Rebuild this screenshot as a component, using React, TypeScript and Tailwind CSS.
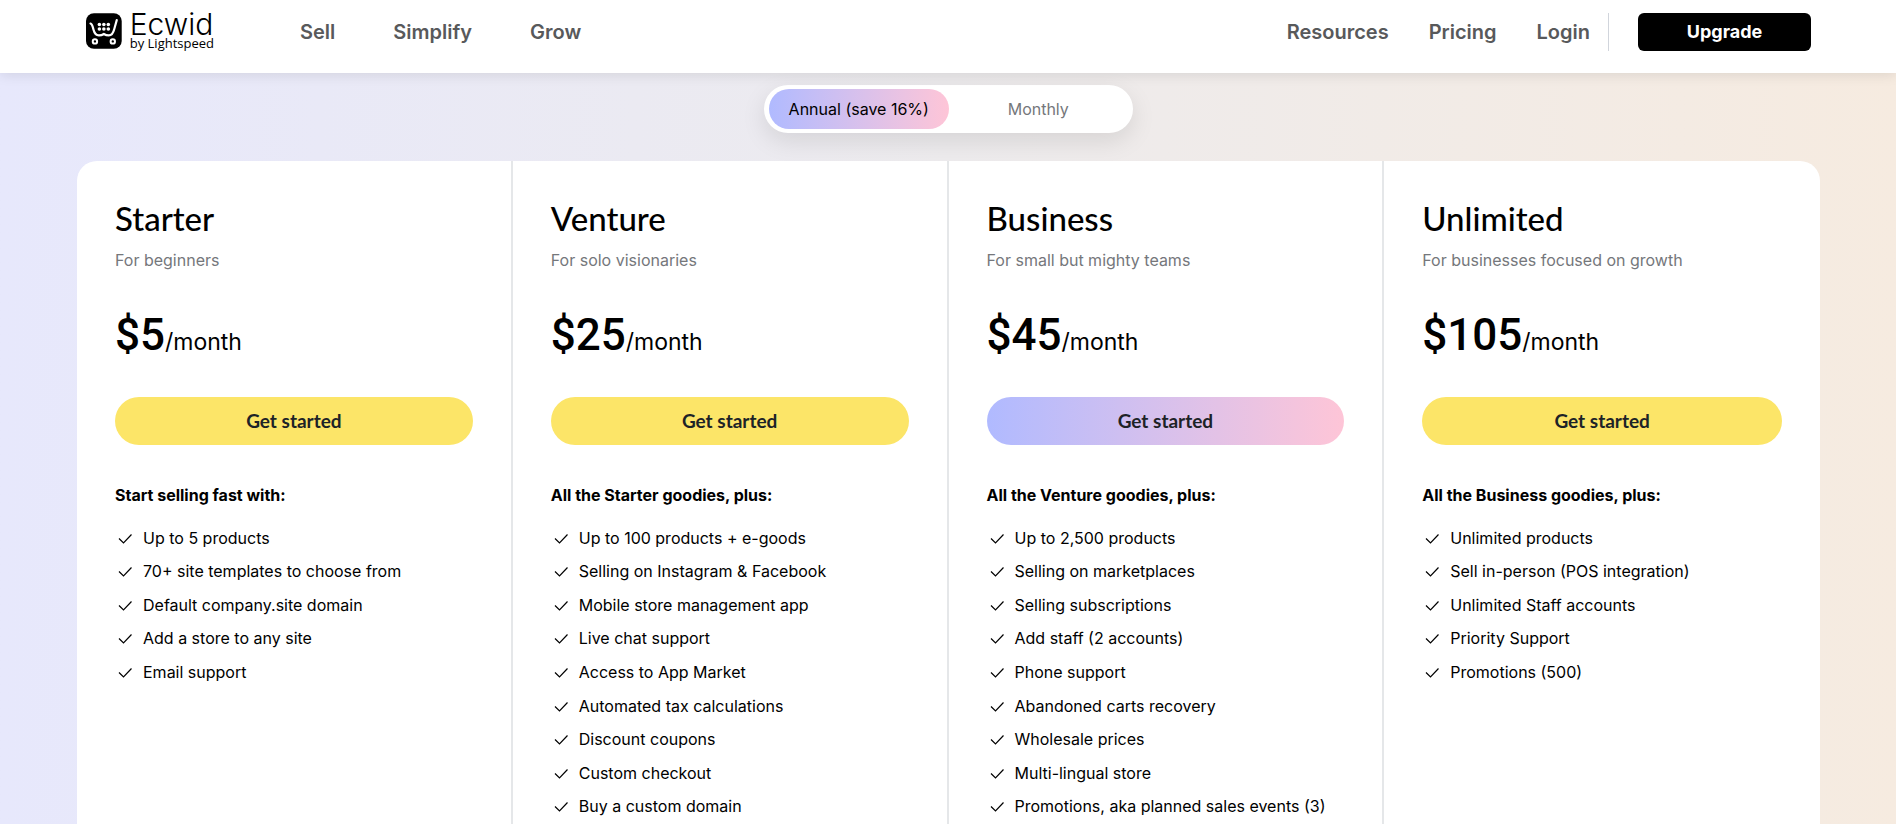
import React, { useState } from "react";

interface Plan {
	name: string;
	audience: string;
	price: string;
	intro: string;
	features: string[];
	highlighted?: boolean;
}

const plans: Plan[] = [
	{
		name: "Starter",
		audience: "For beginners",
		price: "$5",
		intro: "Start selling fast with:",
		features: [
			"Up to 5 products",
			"70+ site templates to choose from",
			"Default company.site domain",
			"Add a store to any site",
			"Email support",
		],
	},
	{
		name: "Venture",
		audience: "For solo visionaries",
		price: "$25",
		intro: "All the Starter goodies, plus:",
		features: [
			"Up to 100 products + e-goods",
			"Selling on Instagram & Facebook",
			"Mobile store management app",
			"Live chat support",
			"Access to App Market",
			"Automated tax calculations",
			"Discount coupons",
			"Custom checkout",
			"Buy a custom domain",
		],
	},
	{
		name: "Business",
		audience: "For small but mighty teams",
		price: "$45",
		intro: "All the Venture goodies, plus:",
		features: [
			"Up to 2,500 products",
			"Selling on marketplaces",
			"Selling subscriptions",
			"Add staff (2 accounts)",
			"Phone support",
			"Abandoned carts recovery",
			"Wholesale prices",
			"Multi-lingual store",
			"Promotions, aka planned sales events (3)",
		],
		highlighted: true,
	},
	{
		name: "Unlimited",
		audience: "For businesses focused on growth",
		price: "$105",
		intro: "All the Business goodies, plus:",
		features: [
			"Unlimited products",
			"Sell in-person (POS integration)",
			"Unlimited Staff accounts",
			"Priority Support",
			"Promotions (500)",
		],
	},
];

const CartLogo: React.FC = () => (
	<svg viewBox="0 0 36 36" className="size-9" aria-hidden="true">
		<rect width="36" height="36" rx="8" fill="#000" />
		<path
			d="M4.500 10.500C6.500 11 6.500 13 7.500 16.500C8.500 20.500 9.500 22.500 13 22.500C15.500 22.500 16.500 22 18 21C19.500 22 20.500 22.500 23 22.500C26.500 22.500 27.500 20 28.500 16L31 7"
			fill="none"
			stroke="#fff"
			strokeWidth="2.200"
			strokeLinecap="round"
			strokeLinejoin="round"
		/>
		<g fill="#fff">
			<circle cx="13.500" cy="11.500" r="1.800" />
			<circle cx="18" cy="11.500" r="1.800" />
			<circle cx="22.500" cy="11.500" r="1.800" />
			<circle cx="13.500" cy="16" r="1.800" />
			<circle cx="18" cy="16" r="1.800" />
			<circle cx="22.500" cy="16" r="1.800" />
		</g>
		<g fill="none" stroke="#fff" strokeWidth="2">
			<circle cx="9" cy="28.500" r="2.200" />
			<circle cx="27" cy="28.500" r="2.200" />
		</g>
	</svg>
);

const CheckMark: React.FC = () => (
	<svg viewBox="0 0 20 20" className="size-5 shrink-0" aria-hidden="true">
		<path d="M4 10.500L8.500 15L16.500 6.500" fill="none" stroke="#000" strokeWidth="1.200" />
	</svg>
);

const Header: React.FC = () => (
	<header className="relative z-10 flex h-[73px] items-start bg-white pt-[13px] pr-[85px] pl-[86px] shadow-[0_2px_12px_rgba(0,0,0,0.1)]">
		<a href="#" className="flex w-32 items-start gap-2 text-black">
			<CartLogo />
			<span className="flex flex-col whitespace-nowrap">
				<span className="text-[30px] leading-[22px] font-light">Ecwid</span>
				<span className="font-[Open_Sans] text-[13px] leading-4">by Lightspeed</span>
			</span>
		</a>
		<nav className="flex h-[38px] flex-1 items-center pl-[86px] text-xl font-semibold text-[#58595b]">
			<div className="flex gap-[58px]">
				<a href="#">Sell</a>
				<a href="#">Simplify</a>
				<a href="#">Grow</a>
			</div>
			<div className="ml-auto flex gap-10">
				<a href="#">Resources</a>
				<a href="#">Pricing</a>
				<a href="#">Login</a>
			</div>
		</nav>
		<div className="ml-[18px] flex h-[38px] items-center border-l border-gray-300 pl-[29px]">
			<button className="h-[38px] w-[173px] rounded-md bg-black text-lg font-bold text-white">Upgrade</button>
		</div>
	</header>
);

const BillingToggle: React.FC = () => {
	const [annual, setAnnual] = useState(true);
	const active = "bg-linear-to-r from-[#b0baff] to-[#fec5d7] text-black";
	const idle = "text-[#75777b]";

	return (
		<div className="mx-auto flex h-12 w-[369px] items-stretch rounded-full bg-white px-[5px] py-1 shadow-[0_8px_24px_rgba(0,0,0,0.1)]">
			<button
				onClick={() => setAnnual(true)}
				aria-pressed={annual}
				className={`flex-1 rounded-full ${annual ? active : idle}`}>
				Annual (save 16%)
			</button>
			<button
				onClick={() => setAnnual(false)}
				aria-pressed={!annual}
				className={`flex-1 rounded-full ${annual ? idle : active}`}>
				Monthly
			</button>
		</div>
	);
};

const PlanCard: React.FC<{ plan: Plan }> = ({ plan }) => (
	<article className="border-r-2 border-[#e5e7e9] px-[38px] pt-[39px] last:border-r-0">
		<h2 className="font-[Lato] text-[33px] leading-9 font-medium">{plan.name}</h2>
		<p className="mt-3 leading-6 text-[#75777b]">{plan.audience}</p>
		<div className="mt-[35px] flex h-14 items-baseline">
			<span className="font-[Roboto] text-[44px] leading-14 font-medium">{plan.price}</span>
			<span className="text-[23px] leading-8">/month</span>
		</div>
		<button
			className={`mt-[34px] h-12 w-full rounded-full font-[Lato] text-[19px] font-bold text-[#1d2327] ${
				plan.highlighted ? "bg-linear-to-r from-[#b0baff] to-[#fec5d7]" : "bg-[#fce568]"
			}`}>
			Get started
		</button>
		<h3 className="mt-[38px] leading-6 font-bold">{plan.intro}</h3>
		<ul className="mt-[14px] grid min-h-[302px] grid-rows-9 items-center">
			{plan.features.map((feature) => (
				<li key={feature} className="flex items-center gap-2">
					<CheckMark />
					{feature}
				</li>
			))}
		</ul>
	</article>
);

const App: React.FC = () => {
	return (
		<div className="flex min-h-screen flex-col bg-linear-to-r from-[#e7e8fc] via-[#edebed] to-[#f6ebe0] font-[Inter,sans-serif] text-base text-black">
			<Header />
			<main className="flex flex-1 flex-col pt-3 pr-[76px] pl-[77px]">
				<BillingToggle />
				<section className="mt-7 grid flex-1 grid-cols-4 rounded-t-[20px] bg-white">
					{plans.map((plan) => (
						<PlanCard key={plan.name} plan={plan} />
					))}
				</section>
			</main>
		</div>
	);
};

export default App;
